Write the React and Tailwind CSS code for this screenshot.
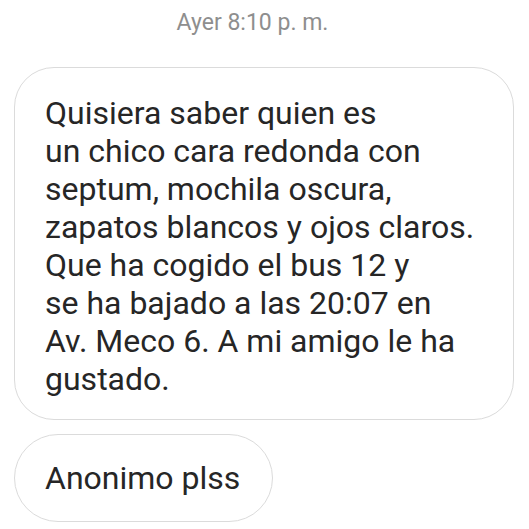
export default function App() {
  const lines = [
    "Quisiera saber quien es",
    "un chico cara redonda con",
    "septum, mochila oscura,",
    "zapatos blancos y ojos claros.",
    "Que ha cogido el bus 12 y",
    "se ha bajado a las 20:07 en",
    "Av. Meco 6. A mi amigo le ha",
    "gustado.",
  ];

  return (
    <div className="min-h-screen w-[529px] bg-white font-['Roboto','Liberation_Sans',sans-serif] overflow-hidden">
      <div className="pt-[10px] pr-[24px] text-center text-[23px] leading-[26px] text-[#8e8e8e]">
        Ayer 8:10 p. m.
      </div>

      <div className="mt-[31px] ml-[14px] w-[500px] rounded-[40px] border-[1.5px] border-[#dbdbdb] pl-[30px] pr-[20px] pt-[26px] pb-[21px] text-[32px] leading-[38px] text-[#262626]">
        {lines.map((l) => (
          <div key={l} className="whitespace-nowrap">
            {l}
          </div>
        ))}
      </div>

      <div className="mt-[14px] ml-[14px] inline-flex h-[88px] items-center rounded-full border-[1.5px] border-[#dbdbdb] pl-[30px] pr-[32px] text-[32px] text-[#262626]">
        Anonimo plss
      </div>
    </div>
  );
}
